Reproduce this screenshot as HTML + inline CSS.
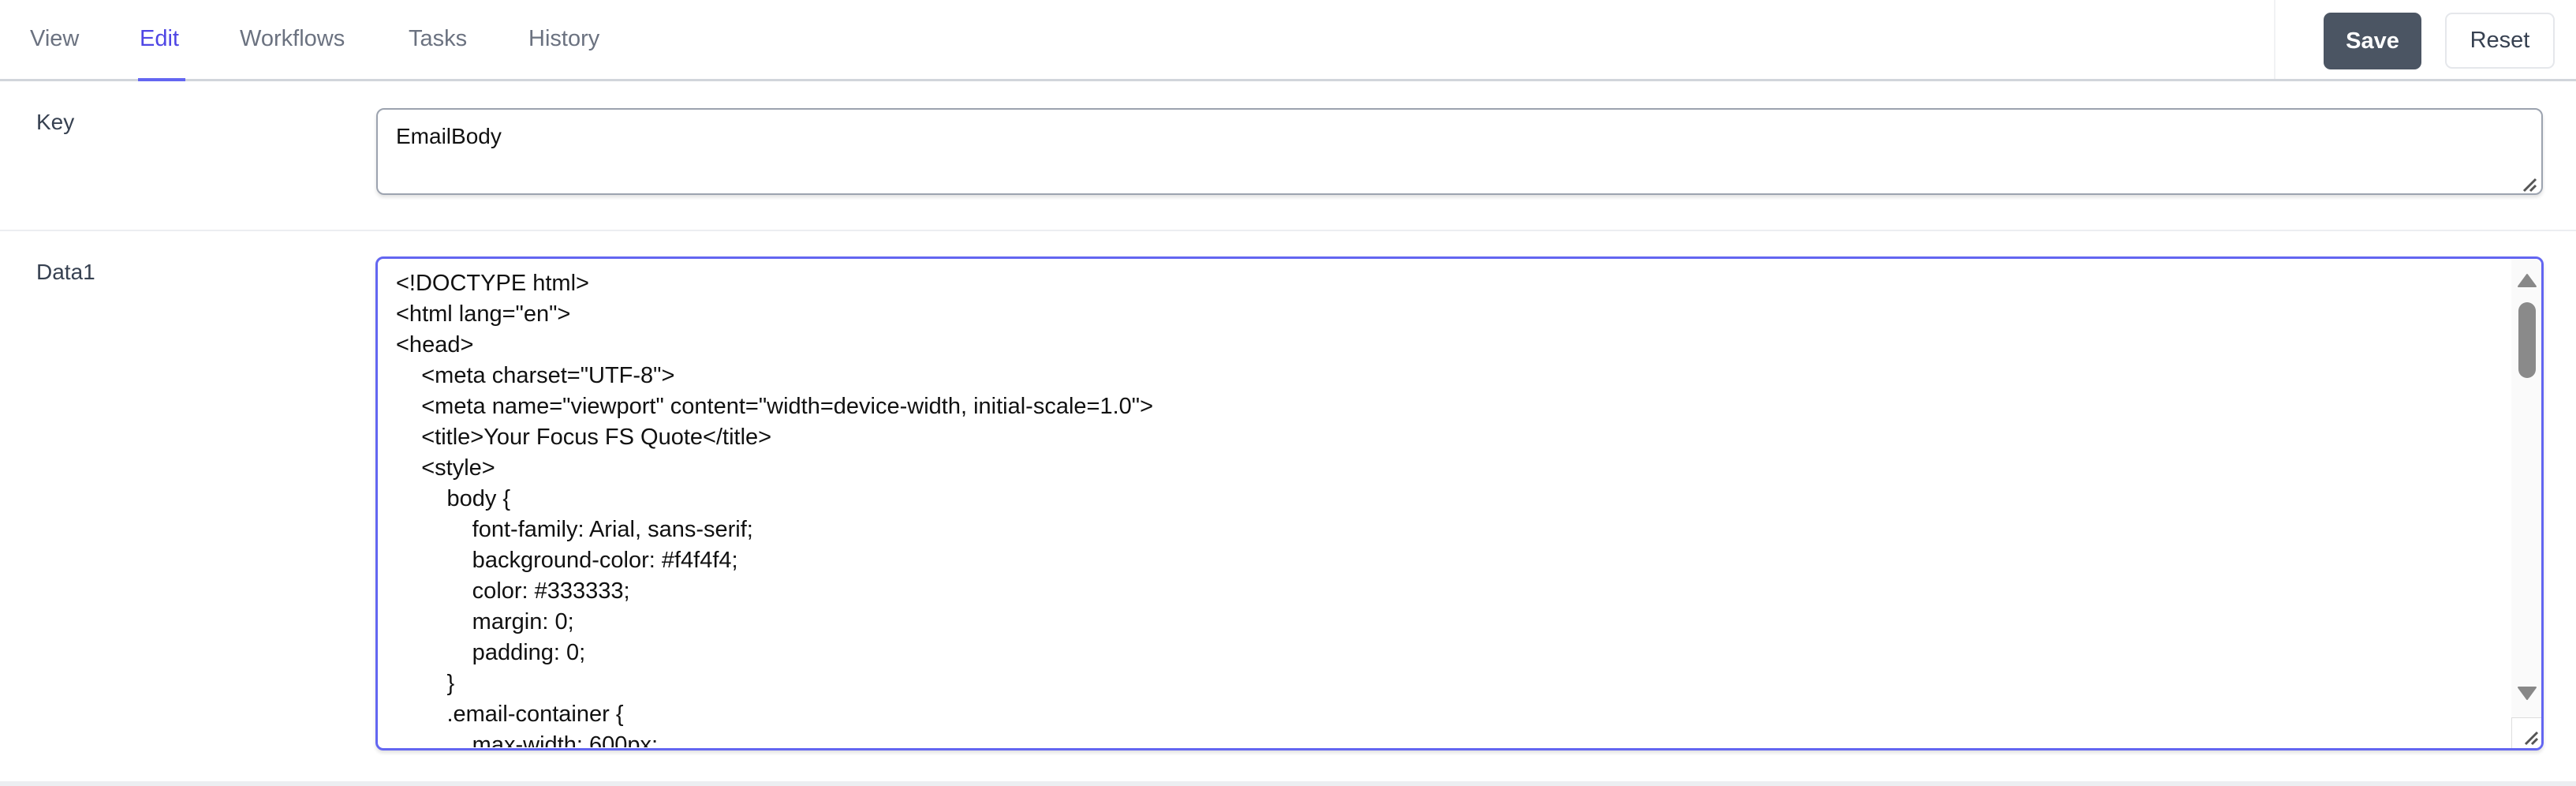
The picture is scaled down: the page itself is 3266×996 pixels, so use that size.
<!DOCTYPE html>
<html><head><meta charset="utf-8"><style>
*{box-sizing:border-box;margin:0;padding:0}
body{width:3266px;height:996px;background:#fff;font-family:"Liberation Sans",Arial,sans-serif;position:relative;overflow:hidden}
.a{position:absolute}
.tab{position:absolute;top:31px;font-size:29px;color:#6b7280;line-height:36px}
.lbl{position:absolute;font-size:28px;color:#374151;line-height:34px}
.clip{position:absolute;left:479px;top:328px;width:2700px;height:619px;overflow:hidden}
.code{position:absolute;left:23px;top:12px;font-size:29px;color:#111;line-height:39px;white-space:pre}
.code div{height:39px}
</style></head><body>
<div class="tab" style="left:38px">View</div>
<div class="tab" style="left:177px;color:#4f46e5">Edit</div>
<div class="tab" style="left:304px">Workflows</div>
<div class="tab" style="left:518px">Tasks</div>
<div class="tab" style="left:670px">History</div>
<div class="a" style="left:0;top:100px;width:3266px;height:3px;background:#d1d5db"></div>
<div class="a" style="left:175px;top:99px;width:60px;height:4px;background:#6366f1"></div>
<div class="a" style="left:2883px;top:0;width:2px;height:100px;background:#f1f2f4"></div>
<div class="a" style="left:2946px;top:16px;width:124px;height:72px;background:#4b5563;border-radius:9px;color:#fff;font-size:29px;font-weight:bold;text-align:center;line-height:72px">Save</div>
<div class="a" style="left:3100px;top:16px;width:139px;height:71px;border:2px solid #e5e7eb;border-radius:9px;color:#374151;font-size:29px;text-align:center;line-height:67px">Reset</div>

<div class="lbl" style="left:46px;top:138px">Key</div>
<div class="a" style="left:477px;top:137px;width:2747px;height:110px;border:2px solid #9ca3af;border-radius:10px;box-shadow:0 3px 5px rgba(0,0,0,0.12)"></div>
<div class="lbl" style="left:502px;top:156px;color:#111">EmailBody</div>
<svg class="a" style="left:3198px;top:224px" width="20" height="20"><path d="M2 18L17 3M10 18L17 11" stroke="#555" stroke-width="3"/></svg>
<div class="a" style="left:0;top:291px;width:3266px;height:2px;background:#eceef1"></div>

<div class="lbl" style="left:46px;top:328px">Data1</div>
<div class="a" style="left:476px;top:325px;width:2749px;height:626px;border:3px solid #6366f1;border-radius:10px;box-shadow:0 3px 5px rgba(0,0,0,0.12);overflow:hidden">
<div class="a" style="right:0;top:0;width:38px;height:100%;background:#fafafa"></div>
<div class="a" style="right:0;bottom:0;width:38px;height:39px;background:#fff;border-left:1px solid #ddd;border-top:1px solid #ddd"></div>
</div>
<svg class="a" style="left:3191px;top:345px" width="26" height="22"><path d="M13 3L24 18H2Z" fill="#888" stroke="#888" stroke-width="2" stroke-linejoin="round"/></svg>
<div class="a" style="left:3193px;top:383px;width:22px;height:96px;background:#8a8a8a;border-radius:11px"></div>
<svg class="a" style="left:3191px;top:868px" width="26" height="22"><path d="M2 3H24L13 18Z" fill="#888" stroke="#888" stroke-width="2" stroke-linejoin="round"/></svg>
<svg class="a" style="left:3200px;top:925px" width="20" height="20"><path d="M2 18L17 3M10 18L17 11" stroke="#555" stroke-width="3"/></svg>

<div class="clip"><div class="code"><div>&lt;!DOCTYPE html&gt;</div><div>&lt;html lang="en"&gt;</div><div>&lt;head&gt;</div><div>    &lt;meta charset="UTF-8"&gt;</div><div>    &lt;meta name="viewport" content="width=device-width, initial-scale=1.0"&gt;</div><div>    &lt;title&gt;Your Focus FS Quote&lt;/title&gt;</div><div>    &lt;style&gt;</div><div>        body {</div><div>            font-family: Arial, sans-serif;</div><div>            background-color: #f4f4f4;</div><div>            color: #333333;</div><div>            margin: 0;</div><div>            padding: 0;</div><div>        }</div><div>        .email-container {</div><div>            max-width: 600px;</div></div></div>
<div class="a" style="left:0;top:990px;width:3266px;height:6px;background:#eceef1"></div>
</body></html>
